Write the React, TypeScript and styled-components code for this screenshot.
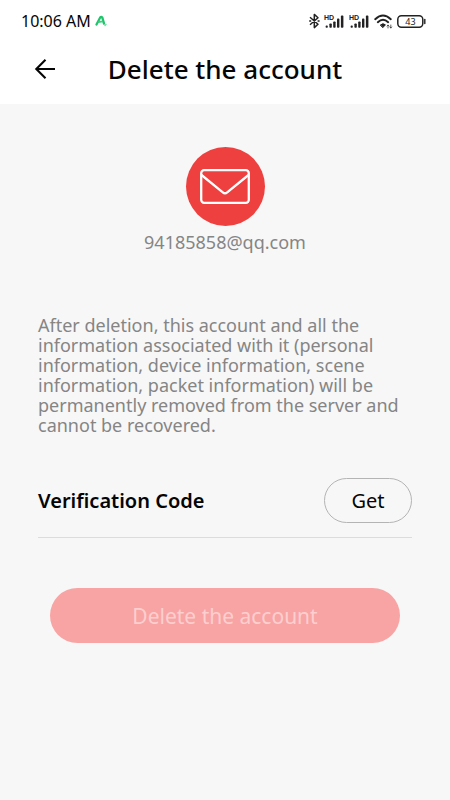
import React, { useState } from 'react';
import styled, { createGlobalStyle } from 'styled-components';

const GlobalStyle = createGlobalStyle`
  * {
    box-sizing: border-box;
  }

  body {
    margin: 0;
    background: #f7f7f7;
    color: #050505;
    font-family: 'Noto Sans', 'Open Sans', sans-serif;
  }

  button,
  input {
    font-family: inherit;
  }
`;

const TopArea = styled.div`
  background: #ffffff;
`;

const StatusBar = styled.div`
  display: flex;
  align-items: center;
  justify-content: space-between;
  height: 36px;
  padding: 6px 24px 0 21px;
`;

const StatusGroup = styled.div<{ $gap: number }>`
  display: flex;
  align-items: center;
  gap: ${({ $gap }) => $gap}px;
`;

const Clock = styled.span`
  font-size: 16px;
  line-height: 20px;
`;

const Header = styled.header`
  display: grid;
  grid-template-columns: 48px 1fr 48px;
  align-items: center;
  height: 68px;
  padding: 0 21px 2px;
`;

const BackButton = styled.button`
  display: flex;
  align-items: center;
  justify-content: center;
  height: 48px;
  padding: 0;
  border: 0;
  background: none;
  color: inherit;
`;

const Title = styled.h1`
  margin: 0;
  font-size: 26px;
  font-weight: 500;
  line-height: 32px;
  text-align: center;
  white-space: nowrap;
`;

const Content = styled.main`
  padding: 43px 38px;
`;

const Account = styled.section`
  display: flex;
  flex-direction: column;
  align-items: center;
  margin-bottom: 61px;
`;

const Avatar = styled.div`
  display: flex;
  align-items: center;
  justify-content: center;
  width: 79px;
  height: 79px;
  border-radius: 50%;
  background: #ee403e;
  color: #ffffff;
`;

const Email = styled.div`
  margin-top: 4px;
  color: #858585;
  font-size: 18px;
  line-height: 24px;
`;

const Notice = styled.p`
  margin: 0 0 43px;
  color: #858585;
  font-size: 18px;
  line-height: 20px;
`;

const CodeRow = styled.div`
  display: flex;
  align-items: center;
  padding-bottom: 14px;
  border-bottom: 1px solid #dcdcdc;
`;

const CodeLabel = styled.label`
  font-size: 20px;
  font-weight: 600;
  line-height: 24px;
  white-space: nowrap;
`;

const CodeInput = styled.input`
  flex: 1;
  min-width: 0;
  height: 40px;
  padding: 0 12px;
  border: 0;
  outline: 0;
  background: transparent;
  font-size: 18px;
`;

const GetButton = styled.button`
  width: 88px;
  height: 45px;
  padding: 0;
  border: 1px solid #b4b4b4;
  border-radius: 23px;
  background: transparent;
  color: #050505;
  font-size: 20px;
`;

const DeleteButton = styled.button`
  display: block;
  width: calc(100% - 24px);
  height: 55px;
  margin: 50px auto 0;
  border: 0;
  border-radius: 28px;
  background: #f8a4a4;
  color: #fccfcf;
  font-size: 21px;
`;

const AppBadge = () => (
  <svg width="13" height="12" viewBox="0 0 13 12" fill="none">
    <path d="M1.5 9.5L5 2.8Q6.2 1.2 7.4 2.8L9 8.6" stroke="#20c46c" strokeWidth="2.3" strokeLinecap="round" />
    <path d="M3 7.2L8 6.4" stroke="#39cf7c" strokeWidth="1.7" />
    <path d="M9.6 11L11.4 8.8" stroke="#6be0a0" strokeWidth="1.2" />
  </svg>
);

const BluetoothIcon = () => (
  <svg width="11" height="16" viewBox="0 0 11 16" fill="none" stroke="#222" strokeWidth="1.5">
    <path d="M1 4.2L9 11.2L5.3 14.6V1.4L9 4.8L1 11.8" strokeLinejoin="round" />
    <path d="M0.2 8H2.2M8.6 8H10.6" />
  </svg>
);

const SignalIcon = () => (
  <svg width="21" height="15" viewBox="0 0 21 15" fill="#222">
    <text x="0" y="6" fontSize="7" fontWeight="700" fontFamily="Liberation Sans, sans-serif">
      HD
    </text>
    <rect x="1.6" y="11.6" width="2.2" height="2.2" rx="0.8" />
    <rect x="5.4" y="9.4" width="2.4" height="4.4" rx="0.8" />
    <rect x="9.2" y="7.4" width="2.4" height="6.4" rx="0.8" />
    <rect x="13" y="4.6" width="2.4" height="9.2" rx="0.8" />
    <rect x="16.9" y="1.6" width="2.5" height="12.2" rx="0.8" />
  </svg>
);

const WifiIcon = () => (
  <svg width="19" height="15" viewBox="0 0 19 15" fill="none" stroke="#222" strokeLinecap="round">
    <path d="M1.2 5.2Q9 -2 16.8 5.2" strokeWidth="1.9" />
    <path d="M3.8 8.2Q9 3.2 14.2 8.2" strokeWidth="1.9" />
    <path d="M6.6 10.8Q9 8.6 11.4 10.8L9 13.4Z" fill="#222" strokeWidth="1" strokeLinejoin="round" />
    <path d="M14 11.2V14M13 12L14 11L15 12M16.8 11V14M15.9 13L16.8 14L17.7 13" strokeWidth="0.7" />
  </svg>
);

const BatteryIcon = () => (
  <svg width="29" height="13" viewBox="0 0 29 13" fill="none">
    <rect x="0.8" y="0.8" width="25" height="11.4" rx="3.6" stroke="#222" strokeWidth="1.5" />
    <path d="M27.8 4.5V8.5" stroke="#222" strokeWidth="1.4" strokeLinecap="round" />
    <text x="13.5" y="9.5" fill="#222" fontSize="9" textAnchor="middle">
      43
    </text>
  </svg>
);

const BackIcon = () => (
  <svg width="22" height="22" viewBox="0 0 22 22" fill="none" stroke="currentColor" strokeWidth="2.1">
    <path d="M21 11H2.5M11.5 1.8L2.3 11L11.5 20.2" />
  </svg>
);

const MailIcon = () => (
  <svg width="50" height="35" viewBox="0 0 50 35" fill="none" stroke="currentColor" strokeWidth="2.3">
    <rect x="1.2" y="1.2" width="47.6" height="32.6" rx="3" />
    <path d="M1.5 6L22.8 23.4Q25 25.2 27.2 23.4L48.5 6" />
  </svg>
);

const App = () => {
  const [code, setCode] = useState('');

  return (
    <>
      <GlobalStyle />
      <TopArea>
        <StatusBar>
          <StatusGroup $gap={4}>
            <Clock>10:06 AM</Clock>
            <AppBadge />
          </StatusGroup>
          <StatusGroup $gap={4}>
            <BluetoothIcon />
            <SignalIcon />
            <SignalIcon />
            <WifiIcon />
            <BatteryIcon />
          </StatusGroup>
        </StatusBar>
        <Header>
          <BackButton type="button" aria-label="Back">
            <BackIcon />
          </BackButton>
          <Title>Delete the account</Title>
        </Header>
      </TopArea>
      <Content>
        <Account>
          <Avatar>
            <MailIcon />
          </Avatar>
          <Email>94185858@qq.com</Email>
        </Account>
        <Notice>
          After deletion, this account and all the information associated with it (personal
          information, device information, scene information, packet information) will be
          permanently removed from the server and cannot be recovered.
        </Notice>
        <CodeRow>
          <CodeLabel htmlFor="code">Verification Code</CodeLabel>
          <CodeInput id="code" value={code} onChange={(e) => setCode(e.target.value)} />
          <GetButton type="button">Get</GetButton>
        </CodeRow>
        <DeleteButton type="button" disabled>
          Delete the account
        </DeleteButton>
      </Content>
    </>
  );
};

export default App;
